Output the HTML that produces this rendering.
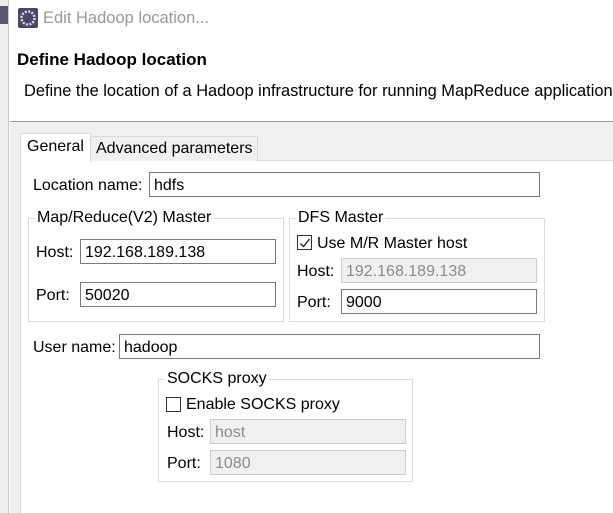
<!DOCTYPE html>
<html><head><style>
*{margin:0;padding:0;box-sizing:border-box}
body{width:613px;height:513px;overflow:hidden;background:#fff;font-family:"Liberation Sans","Noto Sans CJK SC",sans-serif;font-size:16px;color:#000;position:relative}
.a{position:absolute;white-space:nowrap}
.in{position:absolute;border:1px solid #7a7a7a;background:#fff;padding-left:4px;line-height:25px;font-size:16px;white-space:nowrap}
.dis{border-color:#ccc;background:#f0f0f0;color:#8a8a8a}
.grp{position:absolute;border:1px solid #dcdcdc}
.lg{position:absolute;background:#fff;padding:0 2px;line-height:16px;white-space:nowrap}
.cb{position:absolute;width:15px;height:15px;border:1px solid #333;background:#fff}
</style></head><body>
<div class="a" style="left:0;top:0;width:9px;height:513px;background:#eeeef2;border-right:1px solid #c8c8c8"></div>
<div class="a" style="left:0;top:6px;width:8px;height:18px;background:#5a5470"></div>
<svg class="a" style="left:18px;top:8px" width="20" height="20" viewBox="0 0 20 20"><rect width="20" height="20" rx="2" fill="#4b4568"/><circle cx="10" cy="10" r="6.5" fill="none" stroke="#d8d8e8" stroke-width="2.5" stroke-dasharray="2 1.4"/><circle cx="10" cy="10" r="4" fill="#4b4568"/></svg>
<div class="a" style="left:43px;top:9px;font-size:16.5px;color:#999">Edit Hadoop location...</div>
<div class="a" style="left:17px;top:50px;font-size:17px;font-weight:bold">Define Hadoop location</div>
<div class="a" style="left:24px;top:82px;font-size:16.4px">Define the location of a Hadoop infrastructure for running MapReduce applications.</div>
<div class="a" style="left:10px;top:121px;width:603px;height:392px;background:#f0f0f0;border-top:1px solid #a0a0a0"></div>
<div class="a" style="left:20px;top:160px;width:593px;height:353px;background:#fff;border-left:1px solid #d9d9d9;border-top:1px solid #d9d9d9"></div>
<div class="a" style="left:90px;top:136px;width:168px;height:25px;background:#f0f0f0;border:1px solid #d9d9d9;border-bottom:none;padding-left:5px;line-height:24px">Advanced parameters</div>
<div class="a" style="left:20px;top:133px;width:71px;height:29px;background:#fff;border:1px solid #d9d9d9;border-bottom:none;padding-left:6px;line-height:26px">General</div>
<div class="a" style="left:33px;top:177px">Location name:</div>
<div class="in" style="left:149px;top:172px;width:391px;height:25px">hdfs</div>

<div class="grp" style="left:28px;top:218px;width:256px;height:104px"></div>
<div class="lg" style="left:35px;top:210px">Map/Reduce(V2) Master</div>
<div class="a" style="left:36px;top:244px">Host:</div>
<div class="in" style="left:80px;top:239px;width:196px;height:25px">192.168.189.138</div>
<div class="a" style="left:36px;top:287px">Port:</div>
<div class="in" style="left:80px;top:282px;width:196px;height:25px">50020</div>

<div class="grp" style="left:289px;top:218px;width:256px;height:104px"></div>
<div class="lg" style="left:296px;top:210px">DFS Master</div>
<div class="cb" style="left:297px;top:235px"></div>
<svg class="a" style="left:299px;top:237px" width="12" height="12" viewBox="0 0 12 12"><path d="M1.5 6.5 L4.5 9.5 L10.5 2" fill="none" stroke="#222" stroke-width="1.3"/></svg>
<div class="a" style="left:317px;top:235px">Use M/R Master host</div>
<div class="a" style="left:297px;top:263px">Host:</div>
<div class="in dis" style="left:341px;top:258px;width:196px;height:25px">192.168.189.138</div>
<div class="a" style="left:297px;top:294px">Port:</div>
<div class="in" style="left:341px;top:289px;width:196px;height:25px">9000</div>

<div class="a" style="left:33px;top:339px">User name:</div>
<div class="in" style="left:119px;top:334px;width:421px;height:25px">hadoop</div>

<div class="grp" style="left:158px;top:379px;width:255px;height:103px"></div>
<div class="lg" style="left:165px;top:371px">SOCKS proxy</div>
<div class="cb" style="left:166px;top:397px"></div>
<div class="a" style="left:186px;top:396px">Enable SOCKS proxy</div>
<div class="a" style="left:167px;top:424px">Host:</div>
<div class="in dis" style="left:210px;top:419px;width:196px;height:25px">host</div>
<div class="a" style="left:167px;top:455px">Port:</div>
<div class="in dis" style="left:210px;top:450px;width:196px;height:25px">1080</div>
</body></html>
